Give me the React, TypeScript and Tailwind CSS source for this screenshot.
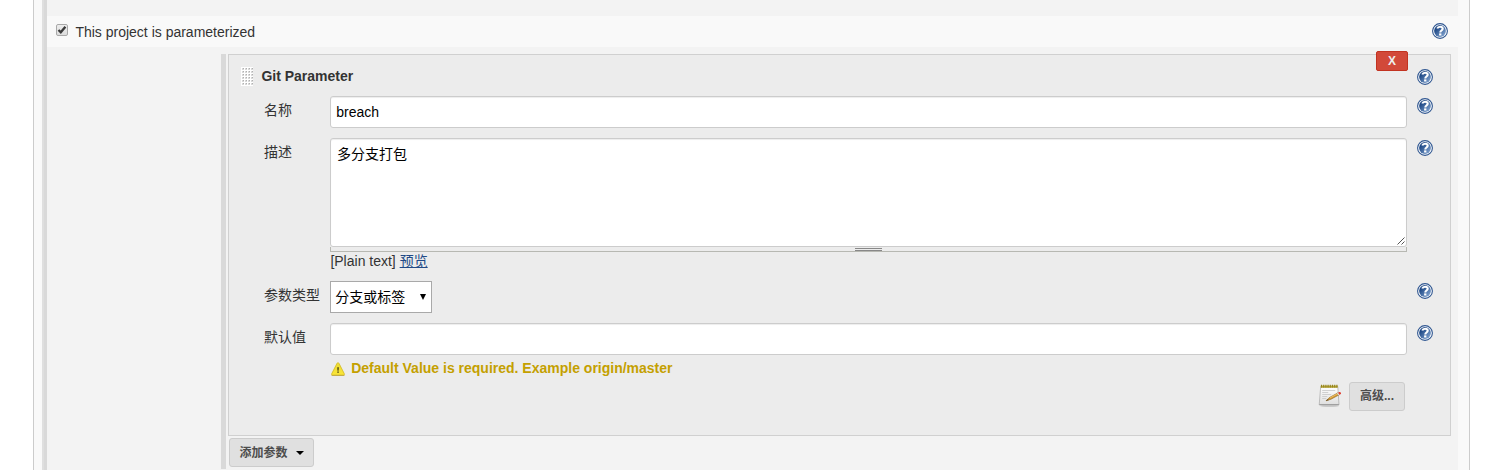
import React from "react";

function HelpIcon({ className = "" }: { className?: string }) {
  return (
    <svg viewBox="0 0 16 16" className={"block h-4 w-4 shrink-0 " + className}>
      <defs>
        <linearGradient id="helpFill" x1="0" y1="0" x2="1" y2="1">
          <stop offset="0.25" stopColor="#204a87" />
          <stop offset="1" stopColor="#8fb0da" />
        </linearGradient>
      </defs>
      <circle cx="8" cy="8" r="7.4" fill="#fff" stroke="#2f5690" strokeWidth="1.1" />
      <circle cx="8" cy="8" r="5.9" fill="url(#helpFill)" />
      <path d="M5.3 5.5C5.7 4.3 6.7 3.7 8 3.7c1.6 0 2.7.8 2.7 2.1 0 1.6-2.4 1.8-2.4 3.6" fill="none" stroke="#fff" strokeWidth="2.1" />
      <rect x="7.1" y="10.4" width="2.3" height="2.1" fill="#fff" />
    </svg>
  );
}

function DragHandle() {
  return (
    <svg viewBox="0 0 12 19" className="mt-3 block h-[19px] w-3 shrink-0" shapeRendering="crispEdges">
      <rect width="12" height="19" fill="#fff" />
      {[1, 4, 7, 10].map((x) =>
        [1, 4, 7, 10, 13, 16].map((y) => (
          <g key={x + "-" + y}>
            <rect x={x} y={y} width="2" height="2" fill="#d8d8d8" />
            <rect x={x + 1} y={y} width="1" height="1" fill="#b0b0b0" />
          </g>
        ))
      )}
    </svg>
  );
}

function WarningIcon() {
  return (
    <svg viewBox="0 0 16 16" className="mt-[3px] block h-4 w-4 shrink-0">
      <defs>
        <linearGradient id="warnFill" x1="0" y1="0" x2="0" y2="1">
          <stop offset="0" stopColor="#eadb32" />
          <stop offset="1" stopColor="#fbe638" />
        </linearGradient>
      </defs>
      <path d="M8 1.7c.5 0 .8.3 1 .7l5.3 10.4c.3.7 0 1.4-.8 1.4h-11c-.8 0-1.1-.7-.8-1.4L7 2.4c.2-.4.5-.7 1-.7z" fill="url(#warnFill)" stroke="#d6bd28" strokeWidth="0.9" />
      <path d="M1.5 14.4h13" stroke="#b9a13c" strokeWidth="0.8" />
      <path d="M7.1 6.3h1.9l-.3 3.4H7.4z" fill="#5f5716" />
      <rect x="7.3" y="10.4" width="1.5" height="1.5" fill="#5f5716" />
    </svg>
  );
}

function NotepadIcon() {
  return (
    <svg viewBox="0 0 24 24" className="mt-[2px] block h-6 w-6 shrink-0">
      <defs>
        <linearGradient id="paper" x1="0" y1="0" x2="0" y2="1">
          <stop offset="0" stopColor="#fff" />
          <stop offset="1" stopColor="#dedede" />
        </linearGradient>
      </defs>
      <ellipse cx="11.5" cy="21.8" rx="9.5" ry="1.2" fill="#bbb" opacity=".7" />
      <path d="M2.7 2.5h17.1l1.2 18.4H1.2z" fill="url(#paper)" stroke="#b0b0b0" strokeWidth=".8" />
      <path d="M1.4 20.5h19.4" stroke="#959595" strokeWidth=".8" />
      <path d="M2.8 1.6h16.8v2.2H2.8z" fill="#b6a63a" />
      <path d="M3.5 .8v2.6M5.7 .8v2.6M7.9 .8v2.6M10.1 .8v2.6M12.3 .8v2.6M14.5 .8v2.6M16.7 .8v2.6M18.9 .8v2.6" stroke="#94831c" strokeWidth="1.1" />
      <path d="M4.2 6.5h13M4.2 8.5h6M4.2 10.5h9M4.2 12.5h5M4.2 14.5h4" stroke="#c6c6c6" strokeWidth=".8" />
      <path d="M8 16.8l4-3.6 8-4.4 1.2 2-8.2 4.4z" fill="#d49a34" stroke="#8d651f" strokeWidth=".6" />
      <path d="M7.5 17.1l2.4-2.1.8 1.3z" fill="#6d5530" />
      <path d="M12 13.9l8-4.4" stroke="#f2c76c" strokeWidth=".8" />
      <path d="M19 9.2l1.1-.6 1.3 2.1-1.1.6z" fill="#ddd" />
      <path d="M20.2 8.5l1.2-.6c1.1-.2 2.2 1.2 1.4 2.1l-1.3.8z" fill="#e03c30" />
    </svg>
  );
}

function Row({ label, className, children }: { label: string; className: string; children: React.ReactNode }) {
  return (
    <div className={"flex items-start pl-[35px] " + className}>
      <div className="mt-1 w-[66px] shrink-0 leading-5">{label}</div>
      <div className="w-[1077px] shrink-0">{children}</div>
      <HelpIcon className="mt-[2px] ml-[10px]" />
    </div>
  );
}

export default function App() {
  return (
    <div className="h-[470px] w-[1500px] overflow-hidden bg-white font-['Liberation_Sans','Noto_Sans_CJK_SC',sans-serif] text-sm leading-5 text-[#333]">
      <div className="ml-[33px] flex h-full w-[1437px] border-x border-[#ccc] bg-[#f9f9f9] pl-2">
        <div className="w-[2px] bg-[#dfdfdf]" />
        <div className="w-[3px] bg-[#d9d9d9]" />
        <div className="w-[1411px] bg-[#f3f3f3] pt-4">
          <div className="flex h-[31px] items-start bg-[#f9f9f9] pl-[9px]">
            <svg viewBox="0 0 12 12" className="mt-2 h-3 w-3 shrink-0">
              <defs>
                <linearGradient id="check" x1="0" y1="0" x2="0" y2="1">
                  <stop offset="0" stopColor="#eee" />
                  <stop offset="1" stopColor="#dcdcdc" />
                </linearGradient>
              </defs>
              <rect x=".5" y=".5" width="11" height="11" rx="1.5" fill="url(#check)" stroke="#a9a9a9" />
              <path d="M2.5 6l2.3 2.3 4.6-5.6" fill="none" stroke="#3b3b3b" strokeWidth="2.3" />
            </svg>
            <span className="mt-[6px] ml-[7.4px]">This project is parameterized</span>
            <HelpIcon className="mt-[7px] mr-[10px] ml-auto" />
          </div>

          <div className="mt-[7px] flex pl-[174px]">
            <div className="h-[415px] w-[5px] shrink-0 bg-[#d9d9d9]" />
            <div className="ml-[2px]">
              <div className="relative h-[382px] w-[1223px] border border-[#d0d0d0] bg-[#ececec]">
                <button className="absolute -top-1 left-[1147px] h-5 w-8 rounded-[2px] border border-[#c23321] bg-[#d24939] text-center text-xs leading-[18px] font-bold text-[#eee]">
                  X
                </button>
                <div className="flex h-[41px] items-start pl-3">
                  <DragHandle />
                  <span className="mt-[11px] ml-[8.4px] font-bold">Git Parameter</span>
                  <HelpIcon className="mt-[14px] mr-[17px] ml-auto" />
                </div>

                <Row label="名称" className="h-[42px]">
                  <div className="h-8 rounded-[3px] border border-[#ccc] bg-white px-[5.3px] leading-[30px] text-black shadow-[inset_0_1px_1px_rgba(0,0,0,0.075)]">breach</div>
                </Row>

                <Row label="描述" className="h-[143px]">
                  <div className="flex h-[109px] items-end justify-between rounded-[3px] border border-[#ccc] bg-white pl-[6px] text-black shadow-[inset_0_1px_1px_rgba(0,0,0,0.075)]">
                    <span className="mt-[5px] self-start">多分支打包</span>
                    <svg viewBox="0 0 10 10" className="h-[10px] w-[10px]">
                      <path d="M1.5 8.5l7-7M5.5 8.5l3-3" stroke="#555" strokeWidth="1" />
                    </svg>
                  </div>
                  <div className="flex h-[5px] justify-center border-x border-b border-[#b7b8b2]">
                    <div className="mt-[1px] h-[3px] w-[27px] border-y border-[#888]" />
                  </div>
                  <div className="-mt-[1px] pl-[0.4px]">
                    [Plain text] <a className="text-[#204a87] underline">预览</a>
                  </div>
                </Row>

                <Row label="参数类型" className="h-[42px]">
                  <div className="flex h-8 w-[102px] items-center border border-[#a9a9a9] bg-white pl-[4.3px] text-black">
                    分支或标签
                    <svg viewBox="0 0 6 6" className="ml-auto mr-[5px] h-[6px] w-[6px]">
                      <path d="M0 0h6L3 6z" fill="#000" />
                    </svg>
                  </div>
                </Row>

                <Row label="默认值" className="h-[59px]">
                  <div className="h-8 rounded-[3px] border border-[#ccc] bg-white shadow-[inset_0_1px_1px_rgba(0,0,0,0.075)]" />
                  <div className="mt-[3px] flex items-start font-bold text-[#c4a000]">
                    <WarningIcon />
                    <span className="ml-[5.2px]">Default Value is required. Example origin/master</span>
                  </div>
                </Row>

                <div className="flex items-start justify-end pr-[45px]">
                  <NotepadIcon />
                  <button className="ml-[7px] h-[29px] w-14 rounded-[3px] border border-[#ccc] bg-[#e0e0e0] text-xs leading-[27px] font-bold text-[#4d4d4d]">高级...</button>
                </div>
              </div>

              <button className="mt-[2px] ml-[1px] flex h-[29px] w-[85px] items-center rounded-[3px] border border-[#ccc] bg-[#e0e0e0] pl-[9.5px] text-xs leading-[27px] font-bold text-[#4d4d4d]">
                <span className="pt-[1px]">添加参数</span>
                <svg viewBox="0 0 8 4" className="ml-2 h-1 w-2">
                  <path d="M0 0h8L4 4z" fill="#000" />
                </svg>
              </button>
            </div>
          </div>
        </div>
      </div>
    </div>
  );
}
